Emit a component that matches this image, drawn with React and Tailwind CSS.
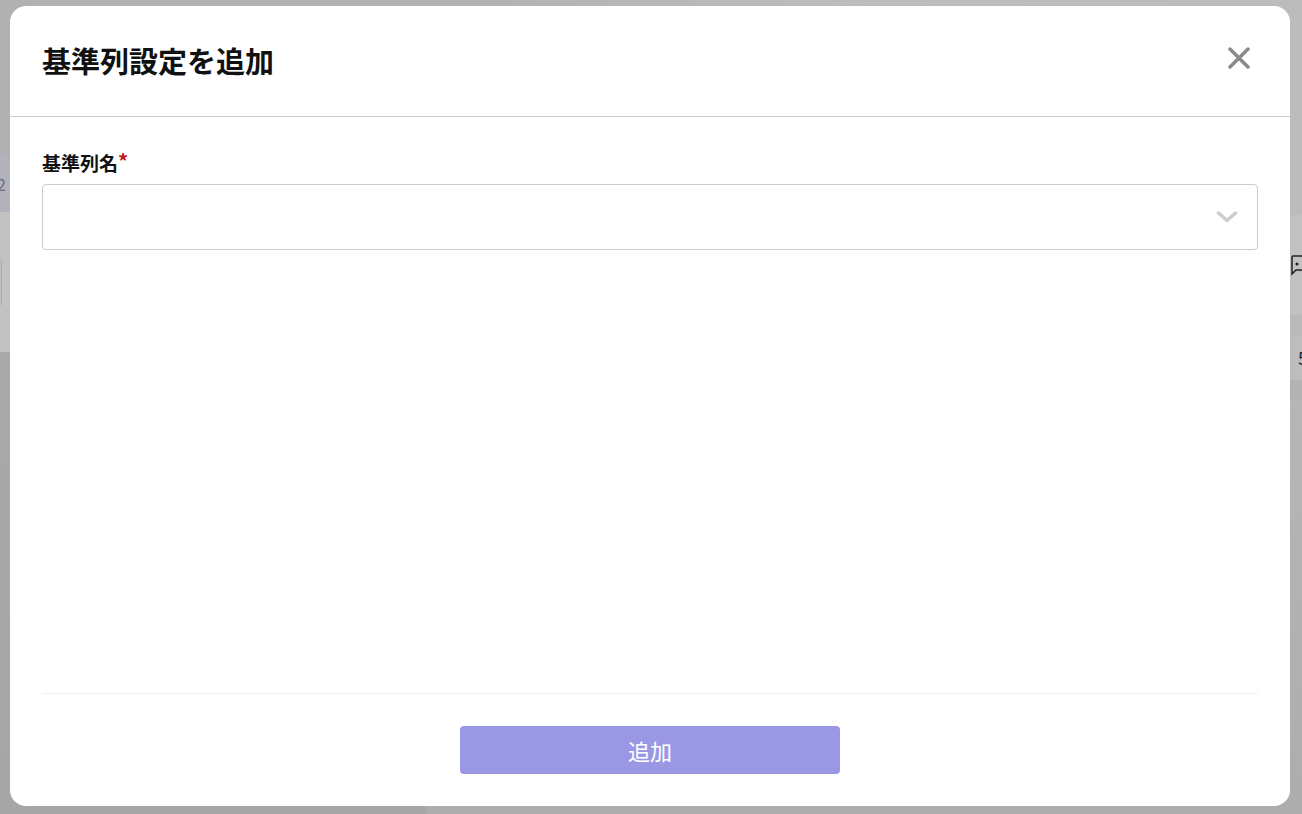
import React from 'react';

const font = { fontFamily: '"Noto Sans CJK JP", "Noto Sans", sans-serif' };

function CloseIcon() {
  return (
    <svg width="22" height="22" viewBox="0 0 22 22" fill="none" stroke="#8a8a8a" strokeWidth="3.5" strokeLinecap="round">
      <path d="M2 2L20 20M20 2L2 20" />
    </svg>
  );
}

function Chevron() {
  return (
    <svg width="22" height="12" viewBox="0 0 22 12" fill="none" stroke="#cccccc" strokeWidth="3.5" strokeLinecap="round" strokeLinejoin="round">
      <path d="M2.5 2L11 9.5L19.5 2" />
    </svg>
  );
}

// dimmed page behind the dialog
function Backdrop() {
  return (
    <div className="flex h-[814px] w-[1302px] overflow-hidden">
      <div className="flex w-[426px] flex-col">
        <div className="h-[155px] bg-[#b1b1b1]" />
        <div className="flex h-[57px] items-center bg-[#b2b2ba] text-[16px] text-[#6e6e7e]">
          <span className="-ml-[3px]">2</span>
        </div>
        <div className="flex h-[140px] flex-col bg-[#c2c2c2] pt-[46px]">
          <div className="-ml-[10px] h-[48px] w-[12px] rounded border border-[#a9a9a9]" />
        </div>
        <div className="flex-1 bg-gradient-to-b from-[#a9a9a9] to-[#a6a6a6]" />
      </div>
      <div className="flex flex-1 flex-col">
        <div className="h-[215px] bg-gradient-to-r from-[#b1b1b1] via-[#bdbdbd] to-[#bcbcbc]" />
        <div className="flex h-[100px] items-center justify-end bg-[#c1c1c1]">
          <svg width="12" height="24" viewBox="0 0 12 24" fill="none" stroke="#222" strokeWidth="1.5">
            <path d="M12 3H3Q2 3 2 4V21L6 17H12" />
            <circle cx="7" cy="11" r="0.8" fill="#222" />
          </svg>
        </div>
        <div className="h-[20px] bg-[#bababa]" />
        <div className="flex h-[45px] items-center justify-end bg-[#bdbdbd] text-[18px] text-[#222]">
          <span className="-mr-[6px]">5</span>
        </div>
        <div className="h-[20px] bg-[#b3b3b3]" />
        <div className="flex-1 bg-gradient-to-b from-[#b6b6b6] to-[#adadad]" />
      </div>
    </div>
  );
}

export default function App() {
  return (
    <div className="relative h-[814px] w-[1302px] overflow-hidden" style={font}>
      <Backdrop />
      <div className="absolute left-[10px] top-[6px] flex h-[800px] w-[1280px] flex-col rounded-[16px] bg-white">
        <div className="flex h-[111px] items-center justify-between border-b border-[#cccccc] pl-[32px] pr-[40px]">
          <h2 className="-mt-[1px] text-[29px] font-bold leading-none text-[#111]">基準列設定を追加</h2>
          <button className="-mt-[6px] flex h-[22px] w-[22px] items-center justify-center">
            <CloseIcon />
          </button>
        </div>
        <div className="flex flex-1 flex-col px-[32px] pt-[34px]">
          <label className="flex items-start text-[19px] font-bold leading-[24px] text-[#111]">
            基準列名<span className="-mt-[1px] text-[20px] font-bold leading-[22px] text-[#c0141c]">*</span>
          </label>
          <div className="mt-[9px] flex h-[66px] items-center justify-end rounded-[4px] border border-[#cccccc] pr-[19px]">
            <Chevron />
          </div>
        </div>
        <div className="mx-[32px] flex flex-col items-center border-t border-[#efefef] pb-[32px] pt-[32px]">
          <button className="flex h-[48px] w-[380px] items-center justify-center rounded-[4px] bg-[#9a98e5] text-[22px] text-white">
            追加
          </button>
        </div>
      </div>
    </div>
  );
}
